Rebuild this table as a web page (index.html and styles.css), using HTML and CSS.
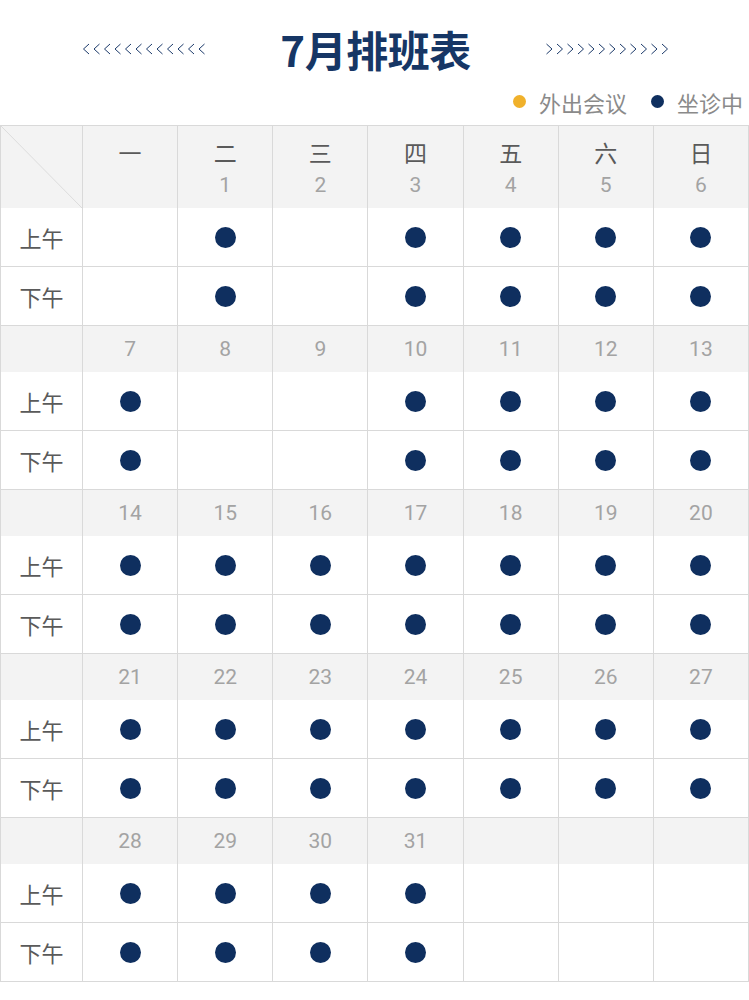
FILE: index.html
```html
<!DOCTYPE html>
<html lang="zh">
<head>
<meta charset="utf-8">
<link rel="stylesheet" href="styles.css">
</head>
<body>
<div class="page">
  <div class="title-bar">
    <svg class="chev" width="126" height="12" viewBox="0 0 126 12">
      <g fill="none" stroke="#1c3a6a" stroke-width="1">
        <polyline points="7,1 1.5,6 7,11"/><polyline points="17.5,1 12,6 17.5,11"/><polyline points="28,1 22.5,6 28,11"/><polyline points="38.5,1 33,6 38.5,11"/><polyline points="49,1 43.5,6 49,11"/><polyline points="59.5,1 54,6 59.5,11"/><polyline points="70,1 64.5,6 70,11"/><polyline points="80.5,1 75,6 80.5,11"/><polyline points="91,1 85.5,6 91,11"/><polyline points="101.5,1 96,6 101.5,11"/><polyline points="112,1 106.5,6 112,11"/><polyline points="122.5,1 117,6 122.5,11"/>
      </g>
    </svg>
    <h1 class="title">7月排班表</h1>
    <svg class="chev" width="126" height="12" viewBox="0 0 126 12">
      <g fill="none" stroke="#1c3a6a" stroke-width="1">
        <polyline points="3.5,1 9,6 3.5,11"/><polyline points="14,1 19.5,6 14,11"/><polyline points="24.5,1 30,6 24.5,11"/><polyline points="35,1 40.5,6 35,11"/><polyline points="45.5,1 51,6 45.5,11"/><polyline points="56,1 61.5,6 56,11"/><polyline points="66.5,1 72,6 66.5,11"/><polyline points="77,1 82.5,6 77,11"/><polyline points="87.5,1 93,6 87.5,11"/><polyline points="98,1 103.5,6 98,11"/><polyline points="108.5,1 114,6 108.5,11"/><polyline points="119,1 124.5,6 119,11"/>
      </g>
    </svg>
  </div>
  <div class="legend">
    <span class="legend-item"><span class="ldot orange"></span>外出会议</span>
    <span class="legend-item"><span class="ldot navy"></span>坐诊中</span>
  </div>

  <div class="grid">
    <!-- header -->
    <div class="cell head corner"><svg class="diag" width="100%" height="100%" viewBox="0 0 81 82" preserveAspectRatio="none"><line x1="0" y1="0" x2="81" y2="82" stroke="#dcdcdc" stroke-width="1"/></svg></div>
    <div class="cell head"><span class="wd">一</span></div>
    <div class="cell head"><span class="wd">二</span><span class="num">1</span></div>
    <div class="cell head"><span class="wd">三</span><span class="num">2</span></div>
    <div class="cell head"><span class="wd">四</span><span class="num">3</span></div>
    <div class="cell head"><span class="wd">五</span><span class="num">4</span></div>
    <div class="cell head"><span class="wd">六</span><span class="num">5</span></div>
    <div class="cell head"><span class="wd">日</span><span class="num">6</span></div>

    <div class="cell label">上午</div>
    <div class="cell"></div>
    <div class="cell"><span class="dot"></span></div>
    <div class="cell"></div>
    <div class="cell"><span class="dot"></span></div>
    <div class="cell"><span class="dot"></span></div>
    <div class="cell"><span class="dot"></span></div>
    <div class="cell"><span class="dot"></span></div>

    <div class="cell label">下午</div>
    <div class="cell"></div>
    <div class="cell"><span class="dot"></span></div>
    <div class="cell"></div>
    <div class="cell"><span class="dot"></span></div>
    <div class="cell"><span class="dot"></span></div>
    <div class="cell"><span class="dot"></span></div>
    <div class="cell"><span class="dot"></span></div>

    <!-- week 2 -->
    <div class="cell week"></div>
    <div class="cell week">7</div>
    <div class="cell week">8</div>
    <div class="cell week">9</div>
    <div class="cell week">10</div>
    <div class="cell week">11</div>
    <div class="cell week">12</div>
    <div class="cell week">13</div>

    <div class="cell label">上午</div>
    <div class="cell"><span class="dot"></span></div>
    <div class="cell"></div>
    <div class="cell"></div>
    <div class="cell"><span class="dot"></span></div>
    <div class="cell"><span class="dot"></span></div>
    <div class="cell"><span class="dot"></span></div>
    <div class="cell"><span class="dot"></span></div>

    <div class="cell label">下午</div>
    <div class="cell"><span class="dot"></span></div>
    <div class="cell"></div>
    <div class="cell"></div>
    <div class="cell"><span class="dot"></span></div>
    <div class="cell"><span class="dot"></span></div>
    <div class="cell"><span class="dot"></span></div>
    <div class="cell"><span class="dot"></span></div>

    <!-- week 3 -->
    <div class="cell week"></div>
    <div class="cell week">14</div>
    <div class="cell week">15</div>
    <div class="cell week">16</div>
    <div class="cell week">17</div>
    <div class="cell week">18</div>
    <div class="cell week">19</div>
    <div class="cell week">20</div>

    <div class="cell label">上午</div>
    <div class="cell"><span class="dot"></span></div>
    <div class="cell"><span class="dot"></span></div>
    <div class="cell"><span class="dot"></span></div>
    <div class="cell"><span class="dot"></span></div>
    <div class="cell"><span class="dot"></span></div>
    <div class="cell"><span class="dot"></span></div>
    <div class="cell"><span class="dot"></span></div>

    <div class="cell label">下午</div>
    <div class="cell"><span class="dot"></span></div>
    <div class="cell"><span class="dot"></span></div>
    <div class="cell"><span class="dot"></span></div>
    <div class="cell"><span class="dot"></span></div>
    <div class="cell"><span class="dot"></span></div>
    <div class="cell"><span class="dot"></span></div>
    <div class="cell"><span class="dot"></span></div>

    <!-- week 4 -->
    <div class="cell week"></div>
    <div class="cell week">21</div>
    <div class="cell week">22</div>
    <div class="cell week">23</div>
    <div class="cell week">24</div>
    <div class="cell week">25</div>
    <div class="cell week">26</div>
    <div class="cell week">27</div>

    <div class="cell label">上午</div>
    <div class="cell"><span class="dot"></span></div>
    <div class="cell"><span class="dot"></span></div>
    <div class="cell"><span class="dot"></span></div>
    <div class="cell"><span class="dot"></span></div>
    <div class="cell"><span class="dot"></span></div>
    <div class="cell"><span class="dot"></span></div>
    <div class="cell"><span class="dot"></span></div>

    <div class="cell label">下午</div>
    <div class="cell"><span class="dot"></span></div>
    <div class="cell"><span class="dot"></span></div>
    <div class="cell"><span class="dot"></span></div>
    <div class="cell"><span class="dot"></span></div>
    <div class="cell"><span class="dot"></span></div>
    <div class="cell"><span class="dot"></span></div>
    <div class="cell"><span class="dot"></span></div>

    <!-- week 5 -->
    <div class="cell week"></div>
    <div class="cell week">28</div>
    <div class="cell week">29</div>
    <div class="cell week">30</div>
    <div class="cell week">31</div>
    <div class="cell week"></div>
    <div class="cell week"></div>
    <div class="cell week"></div>

    <div class="cell label">上午</div>
    <div class="cell"><span class="dot"></span></div>
    <div class="cell"><span class="dot"></span></div>
    <div class="cell"><span class="dot"></span></div>
    <div class="cell"><span class="dot"></span></div>
    <div class="cell"></div>
    <div class="cell"></div>
    <div class="cell"></div>

    <div class="cell label">下午</div>
    <div class="cell"><span class="dot"></span></div>
    <div class="cell"><span class="dot"></span></div>
    <div class="cell"><span class="dot"></span></div>
    <div class="cell"><span class="dot"></span></div>
    <div class="cell"></div>
    <div class="cell"></div>
    <div class="cell"></div>
  </div>
</div>
</body>
</html>
```

FILE: styles.css
```css
* { box-sizing: border-box; }
html, body {
  margin: 0;
  padding: 0;
  background: #ffffff;
}
body {
  font-family: "Noto Sans CJK SC", "Noto Sans", "Liberation Sans", sans-serif;
  color: #555555;
}
.page {
  width: 749px;
}
.title-bar {
  height: 86px;
  display: flex;
  align-items: center;
  justify-content: center;
  gap: 72px;
  padding-top: 12px;
  padding-left: 2px;
}
.title {
  margin: 0;
  font-size: 42px;
  font-weight: 700;
  color: #163665;
  line-height: 1;
  letter-spacing: -0.5px;
}
.chev { display: block; }
.legend {
  height: 39px;
  display: flex;
  justify-content: flex-end;
  align-items: center;
  gap: 24px;
  padding-right: 6px;
  padding-bottom: 8px;
  font-size: 22px;
  color: #8a8a8a;
}
.legend-item {
  display: flex;
  align-items: center;
  gap: 13px;
}
.ldot {
  width: 13px;
  height: 13px;
  border-radius: 50%;
  display: inline-block;
}
.ldot.orange { background: #f0b12b; }
.ldot.navy { background: #0f2f5f; }

.grid {
  display: grid;
  grid-template-columns: 82px repeat(7, 1fr);
  width: 749px;
  border-top: 1px solid #d9d9d9;
  border-left: 1px solid #d9d9d9;
}
.cell {
  height: 59px;
  border-right: 1px solid #d9d9d9;
  border-bottom: 1px solid #d9d9d9;
  display: flex;
  align-items: center;
  justify-content: center;
  background: #ffffff;
}
.cell.head {
  height: 82px;
  background: #f3f3f3;
  border-bottom: none;
  flex-direction: column;
  justify-content: flex-start;
  padding-top: 10px;
}
.cell.corner {
  padding: 0;
}
.diag {
  display: block;
}
.wd {
  font-size: 23px;
  line-height: 32px;
  color: #5a5a5a;
}
.num {
  font-size: 21px;
  line-height: 34px;
  color: #a3a3a3;
  font-family: Roboto, "Noto Sans", sans-serif;
}
.cell.week {
  height: 46px;
  background: #f3f3f3;
  border-bottom: none;
  font-size: 21px;
  color: #a3a3a3;
  font-family: Roboto, "Noto Sans", sans-serif;
}
.cell.label {
  font-size: 22px;
  color: #5a5a5a;
}
.dot {
  width: 21px;
  height: 21px;
  border-radius: 50%;
  background: #0f2f5f;
  display: block;
}
```
